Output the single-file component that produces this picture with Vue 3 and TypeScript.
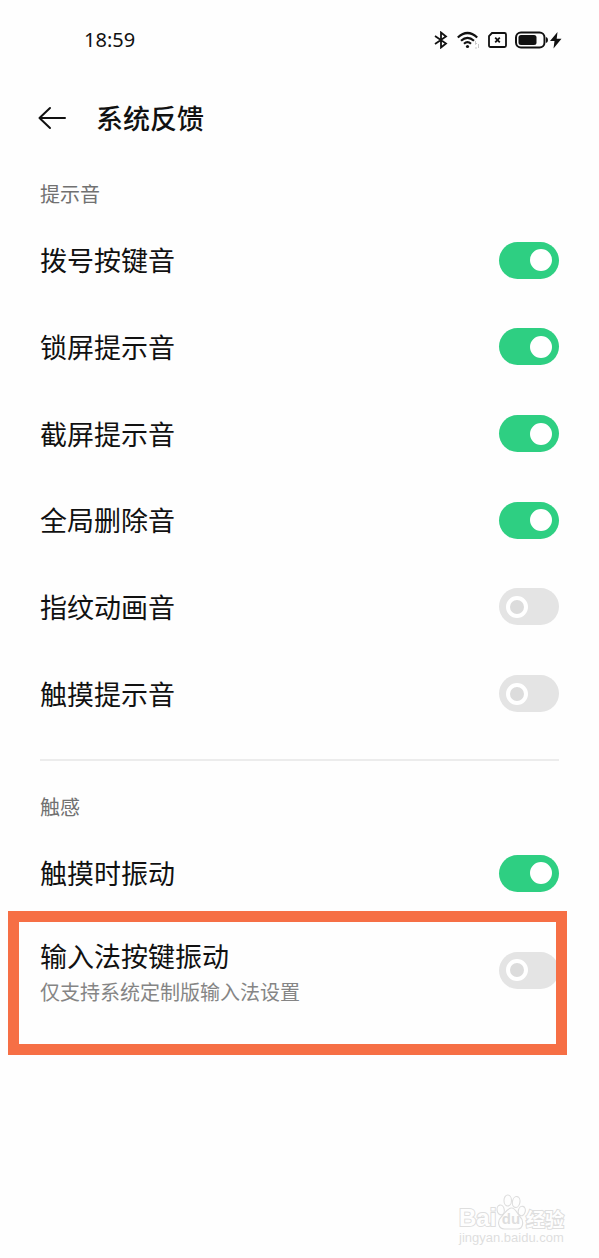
<script setup lang="ts">
import { reactive } from 'vue'

interface Setting {
  id: string
  label: string
  on: boolean
}

const sounds = reactive<Setting[]>([
  { id: 'dial', label: '拨号按键音', on: true },
  { id: 'lock', label: '锁屏提示音', on: true },
  { id: 'capture', label: '截屏提示音', on: true },
  { id: 'delete', label: '全局删除音', on: true },
  { id: 'fingerprint', label: '指纹动画音', on: false },
  { id: 'touch', label: '触摸提示音', on: false },
])

const touchVibration = reactive<Setting>({ id: 'vibrate', label: '触摸时振动', on: true })
const keyVibration = reactive<Setting>({ id: 'keys', label: '输入法按键振动', on: false })
</script>

<template>
  <div class="page">
    <div class="status">
      <span class="time">18:59</span>
      <div class="status-icons">
        <svg width="15" height="18" viewBox="0 0 15 18" fill="none" stroke="#111" stroke-width="1.8" aria-label="蓝牙">
          <path d="M1 5 12 12.500 7 16.500V1.500L12 5.500 1 13" />
        </svg>
        <svg width="23" height="18" viewBox="0 0 23 18" fill="none" stroke="#111" stroke-width="2.200" aria-label="无线网络">
          <path d="M.8 6.500Q10.500-2.500 20.200 6.500M4 9.800Q10.500 4 17 9.800M7 12.800Q10.500 9.600 14 12.800" />
          <circle cx="10.500" cy="15.500" r="1.600" fill="#111" stroke="none" />
          <path d="M18.500 10v3.500l1.500-1.500M18 17h2M21.500 13v4" stroke="#c8c8c8" stroke-width="1" />
        </svg>
        <svg width="19" height="16" viewBox="0 0 19 16" fill="none" stroke="#111" stroke-width="1.800" aria-label="无 SIM 卡">
          <path d="M4 1h12.500q1.500 0 1.500 1.500v11q0 1.500-1.500 1.500H2.500Q1 15 1 13.500V4z" />
          <path d="m7.200 5.700 4.600 4.600m0-4.600-4.600 4.600" />
        </svg>
        <svg width="47" height="18" viewBox="0 0 47 18" aria-label="正在充电">
          <rect x="1" y="1.500" width="28.500" height="15" rx="5" fill="none" stroke="#111" stroke-width="2" />
          <rect x="3.500" y="4" width="18" height="10" rx="2.500" fill="#111" />
          <path d="M31 6q2 .5 2 3t-2 3z" fill="#111" />
          <path d="M42.500 1 35 10h4.500l-1 7.500L46.500 7.800h-4.800z" fill="#111" />
        </svg>
      </div>
    </div>

    <header class="header">
      <button class="back" type="button" aria-label="返回">
        <svg width="28" height="24" viewBox="0 0 28 24" fill="none" stroke="#111" stroke-width="2" stroke-linecap="round" stroke-linejoin="round">
          <path d="M12 2 1.500 12 12 22M1.500 12H27" />
        </svg>
      </button>
      <h1>系统反馈</h1>
    </header>

    <main>
      <section>
        <h2>提示音</h2>
        <div class="list">
          <label v-for="item in sounds" :key="item.id" class="row" :for="item.id">
            <span class="label">{{ item.label }}</span>
            <input :id="item.id" v-model="item.on" class="switch" type="checkbox" role="switch" />
          </label>
        </div>
      </section>

      <section class="haptics">
        <h2>触感</h2>
        <label class="row single" :for="touchVibration.id">
          <span class="label">{{ touchVibration.label }}</span>
          <input :id="touchVibration.id" v-model="touchVibration.on" class="switch" type="checkbox" role="switch" />
        </label>
        <label class="row detailed" :for="keyVibration.id">
          <span class="texts">
            <span class="label">{{ keyVibration.label }}</span>
            <span class="note">仅支持系统定制版输入法设置</span>
          </span>
          <input :id="keyVibration.id" v-model="keyVibration.on" class="switch" type="checkbox" role="switch" />
          <span class="marker"></span>
        </label>
      </section>
    </main>

    <footer class="watermark">
      <div class="brand">
        <span class="bai">Bai</span>
        <span class="paw">
          <svg width="30" height="36" viewBox="0 0 32 36" preserveAspectRatio="none" fill="#fefefe" stroke="#dedede" stroke-width="1.200">
            <ellipse cx="5" cy="16" rx="3.800" ry="5" transform="rotate(-12 5 16)" />
            <ellipse cx="12.500" cy="6.500" rx="4" ry="5.500" />
            <ellipse cx="21.500" cy="8" rx="4" ry="5.500" transform="rotate(12 21.500 8)" />
            <ellipse cx="27.500" cy="17" rx="3.700" ry="4.800" transform="rotate(16 27.500 17)" />
            <path d="M16.500 14c4.500 0 5.500 5 9 8.500 4.500 4 4 12-2.500 12.500H9c-7-.5-8-8-3.500-12 4-3.500 6-9 11-9z" />
          </svg>
          <span class="du">du</span>
        </span>
        <span class="jingyan">经验</span>
      </div>
      <div class="site">jingyan.baidu.com</div>
    </footer>
  </div>
</template>

<style>
body {
  margin: 0;
  background: #fefefe;
}
</style>

<style scoped>
.page {
  box-sizing: border-box;
  min-height: 100vh;
  padding: 24px 40px 12px;
  display: flex;
  flex-direction: column;
  background: #fefefe;
  color: #111;
  font-family: "Noto Sans", "Noto Sans CJK SC", sans-serif;
}

.status {
  height: 32px;
  padding-left: 44px;
  display: flex;
  align-items: center;
  justify-content: space-between;
}

.time {
  font-size: 20px;
  line-height: 32px;
}

.status-icons {
  display: flex;
  align-items: center;
  gap: 8px;
  margin-right: -3px;
}

.status-icons svg,
.back svg,
.paw svg {
  display: block;
}

.header {
  height: 48px;
  margin-top: 38px;
  display: flex;
  align-items: center;
  gap: 30px;
}

.back {
  margin-left: -2px;
  padding: 0;
  border: 0;
  background: none;
}

h1,
h2 {
  margin: 0;
  font-family: "Noto Sans CJK SC", sans-serif;
}

h1 {
  font-size: 27px;
  line-height: 48px;
  font-weight: 500;
}

h2 {
  font-size: 20px;
  line-height: 28px;
  font-weight: 400;
  color: #717171;
}

main {
  margin-top: 38px;
}

.list {
  min-height: 520px;
  margin-top: 9px;
  display: grid;
  grid-auto-rows: 1fr;
}

.row {
  display: flex;
  align-items: center;
  justify-content: space-between;
}

.label {
  font-family: "Noto Sans CJK SC", sans-serif;
  font-size: 27px;
  line-height: 36px;
}

.haptics {
  margin-top: 22px;
  padding-top: 32px;
  border-top: 2px solid #ececec;
}

.single {
  height: 88px;
  margin-top: 8px;
}

.detailed {
  position: relative;
  height: 106px;
}

.texts {
  display: flex;
  flex-direction: column;
  gap: 4px;
  padding-top: 4px;
}

.note {
  font-family: "Noto Sans CJK SC", sans-serif;
  font-size: 20px;
  line-height: 28px;
  color: #858585;
}

.marker {
  position: absolute;
  inset: -6px -8px -32px -32px;
  border: 11px solid #f66f45;
  pointer-events: none;
}

.switch {
  appearance: none;
  box-sizing: border-box;
  flex: none;
  display: flex;
  align-items: center;
  width: 60px;
  height: 37px;
  margin: 0;
  padding: 0 7px;
  border-radius: 19px;
  background: #e4e4e4;
}

.switch::before {
  content: "";
  box-sizing: border-box;
  width: 22px;
  height: 22px;
  border: 4px solid #fff;
  border-radius: 50%;
  background: #dcdcdc;
}

.switch:checked {
  justify-content: flex-end;
  background: #2ecf82;
}

.switch:checked::before {
  background: #fff;
}

.watermark {
  width: 106px;
  margin-top: auto;
  margin-right: -6px;
  align-self: flex-end;
  color: #fefefe;
  white-space: nowrap;
}

.brand {
  display: flex;
  align-items: flex-end;
  height: 36px;
}

.bai,
.jingyan {
  flex: none;
  -webkit-text-stroke: 2px #dedede;
  paint-order: stroke fill;
}

.bai {
  width: 37px;
  font: 700 24px/24px "Liberation Sans", sans-serif;
}

.paw {
  position: relative;
  flex: none;
}

.du {
  position: absolute;
  inset: auto 0 3px;
  text-align: center;
  color: #dedede;
  font: 700 15px/16px "Liberation Sans", sans-serif;
}

.jingyan {
  font: 700 19px/22px "Noto Sans CJK SC", sans-serif;
}

.site {
  font: 400 13px/16px "Liberation Sans", sans-serif;
  color: #dedede;
}
</style>
